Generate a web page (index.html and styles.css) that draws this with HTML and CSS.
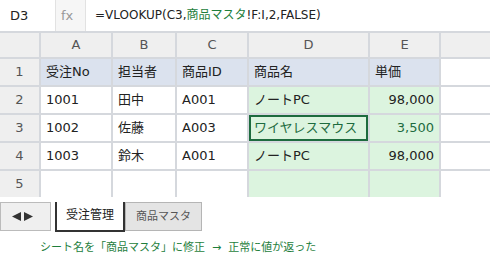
FILE: index.html
```html
<!DOCTYPE html>
<html lang="ja">
<head>
<meta charset="UTF-8">
<title>VLOOKUP</title>
<link rel="stylesheet" href="styles.css">
</head>
<body>
    <div class="formula-bar">
        <div class="name-box">D3</div>
        <div class="fx">fx</div>
        <div class="formula">=VLOOKUP(C3,<span class="ref">商品マスタ</span>!F:I,2,FALSE)</div>
    </div>

    <div class="sheet">
        <div class="corner"></div>
        <div class="col-head">A</div>
        <div class="col-head">B</div>
        <div class="col-head">C</div>
        <div class="col-head">D</div>
        <div class="col-head">E</div>
        <div class="col-head"></div>

        <div class="row-head">1</div>
        <div class="cell title">受注No</div>
        <div class="cell title">担当者</div>
        <div class="cell title">商品ID</div>
        <div class="cell title">商品名</div>
        <div class="cell title">単価</div>
        <div class="cell"></div>

        <div class="row-head">2</div>
        <div class="cell">1001</div>
        <div class="cell">田中</div>
        <div class="cell">A001</div>
        <div class="cell result">ノートPC</div>
        <div class="cell result num">98,000</div>
        <div class="cell"></div>

        <div class="row-head">3</div>
        <div class="cell">1002</div>
        <div class="cell">佐藤</div>
        <div class="cell">A003</div>
        <div class="cell result selected">ワイヤレスマウス</div>
        <div class="cell result num fixed">3,500</div>
        <div class="cell"></div>

        <div class="row-head">4</div>
        <div class="cell">1003</div>
        <div class="cell">鈴木</div>
        <div class="cell">A001</div>
        <div class="cell result">ノートPC</div>
        <div class="cell result num">98,000</div>
        <div class="cell"></div>

        <div class="row-head">5</div>
        <div class="cell"></div>
        <div class="cell"></div>
        <div class="cell"></div>
        <div class="cell result"></div>
        <div class="cell result"></div>
        <div class="cell"></div>
    </div>

    <div class="tabs">
        <div class="tab-nav">
            <svg width="22" height="9" viewBox="0 0 22 9">
                <path d="M0 4.5 L9 0 L9 9 Z" fill="#333"/>
                <path d="M12 0 L21 4.5 L12 9 Z" fill="#333"/>
            </svg>
        </div>
        <div class="tab active">受注管理</div>
        <div class="tab">商品マスタ</div>
    </div>

    <p class="note">シート名を「商品マスタ」に修正&nbsp; →&nbsp; 正常に値が返った</p>
</body>
</html>
```

FILE: styles.css
```css
body {
    margin: 0;
    background: #fff;
    font-family: "DejaVu Sans", "Noto Sans CJK JP", sans-serif;
    font-size: 13px;
    color: #222;
}

.formula-bar {
    display: flex;
    height: 31px;
    border-bottom: 2px solid #d5d8dd;
}

.name-box {
    width: 45px;
    padding-left: 10px;
    line-height: 31px;
    border-right: 1px solid #e2e2e2;
}

.fx {
    width: 24px;
    background: #f6f6f6;
    color: #999;
    padding-left: 5px;
    line-height: 31px;
    border-right: 1px solid #e2e2e2;
}

.formula {
    padding-left: 9px;
    line-height: 31px;
    font-size: 12px;
}

.ref {
    color: #1e7e3c;
}

.sheet {
    display: grid;
    grid-template-columns: 39px 70px 62px 70px 119px 69px 1fr;
    grid-template-rows: 24px repeat(5, 26px);
    gap: 2px;
    background: #d5d8dd;
}

.corner,
.col-head,
.row-head {
    background: #efefef;
    color: #555;
    text-align: center;
}

.col-head {
    line-height: 24px;
}

.row-head {
    line-height: 26px;
}

.cell {
    background: #fff;
    padding: 0 5px;
    line-height: 26px;
    white-space: nowrap;
}

.cell.title {
    background: #dbe2ee;
}

.cell.result {
    background: #dcf4df;
}

.num {
    text-align: right;
}

.selected {
    box-shadow: inset 0 0 0 2px #1d6b3e;
    color: #1d6b3e;
}

.fixed {
    color: #1d6b3e;
}

.tabs {
    display: flex;
    align-items: flex-start;
    margin-top: 5px;
}

.tab-nav {
    width: 38px;
    height: 27px;
    display: flex;
    align-items: center;
    padding-left: 11px;
    background: #efefef;
    border: 1px solid #bbb;
    margin-right: 4px;
}

.tab {
    height: 27px;
    line-height: 27px;
    padding: 0 10px;
    background: #e4e4e4;
    border: 1px solid #b5b5b5;
    color: #555;
    font-size: 11px;
}

.tab.active {
    height: 28px;
    background: #fff;
    color: #222;
    border: 2px solid #333;
    border-top: none;
    padding: 0 9px;
    font-size: 12px;
}

.note {
    margin: 6px 0 0 40px;
    font-size: 11px;
    color: #1e7e3c;
}
```
